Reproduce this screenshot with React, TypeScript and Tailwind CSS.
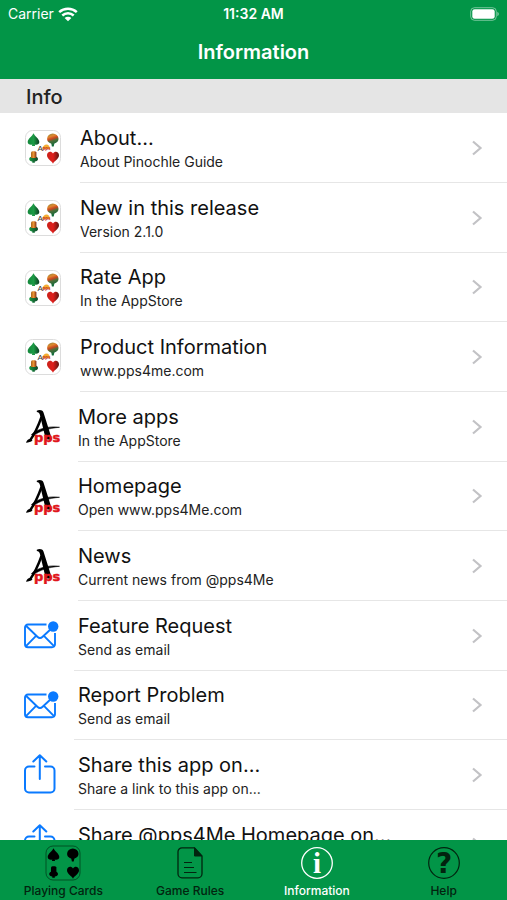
import { useState } from "react";
import type { ReactNode } from "react";
import clsx from "clsx";

type IconKind = "cards" | "apps" | "mail" | "share";

interface Item {
  title: string;
  detail: string;
  icon: IconKind;
}

const ITEMS: Item[] = [
  { title: "About...", detail: "About Pinochle Guide", icon: "cards" },
  { title: "New in this release", detail: "Version 2.1.0", icon: "cards" },
  { title: "Rate App", detail: "In the AppStore", icon: "cards" },
  { title: "Product Information", detail: "www.pps4me.com", icon: "cards" },
  { title: "More apps", detail: "In the AppStore", icon: "apps" },
  { title: "Homepage", detail: "Open www.pps4Me.com", icon: "apps" },
  { title: "News", detail: "Current news from @pps4Me", icon: "apps" },
  { title: "Feature Request", detail: "Send as email", icon: "mail" },
  { title: "Report Problem", detail: "Send as email", icon: "mail" },
  { title: "Share this app on...", detail: "Share a link to this app on...", icon: "share" },
  { title: "Share @pps4Me Homepage on...", detail: "", icon: "share" },
];

const SPADE =
  "M8.5 3.2C9.7 6.3 14.300 8.500 14.300 12c0 2.200-2.300 3.200-4.600 2.500l.4 1.400H6.900l.4-1.400C5 15.200 2.700 14.200 2.700 12 2.700 8.500 7.300 6.300 8.500 3.200z";
const BALL =
  "M27.800 3.400a5.700 5.400 0 0 1 5.700 5.400c0 3-2.300 4-4.200 4.900l-.6 2.700h-1.800l-.6-2.700c-1.900-.9-4.200-1.900-4.200-4.900a5.700 5.400 0 0 1 5.700-5.400z";
const ACORN_CAP =
  "M4.200 29c0-1.800 1.400-2.600 3-2.600h2.800c1.700 0 3 .8 3 2.600 0 1.600-1.400 2.500-3.200 2.500v1.300H7.300v-1.300c-1.800 0-3.100-.9-3.100-2.500z";
const ACORN = "M6 22.500c0-1.700 5.400-1.700 5.400 0V28H6z";
const HEART =
  "M28 33.800c-.9-2.900-6-4.600-6-8.600 0-3.900 4.500-4.600 6-1.600 1.500-3 6-2.300 6 1.600 0 4-5.100 5.700-6 8.600z";

function CardsIcon({ id }: { id: string }) {
  return (
    <svg width="36" height="36" viewBox="0 0 36 36" aria-hidden="true">
      <defs>
        <linearGradient id={`${id}-leaf`}>
          <stop offset="0" stopColor="#12873a" />
          <stop offset="0.5" stopColor="#1c9a45" />
          <stop offset="1" stopColor="#0c3d22" />
        </linearGradient>
        <linearGradient id={`${id}-ball`} x2="0.3" y2="1">
          <stop offset="0" stopColor="#7d8a48" />
          <stop offset="0.3" stopColor="#e0852c" />
          <stop offset="0.5" stopColor="#c5451f" />
          <stop offset="0.65" stopColor="#4f6d3a" />
          <stop offset="1" stopColor="#0d6b3b" />
        </linearGradient>
        <linearGradient id={`${id}-acorn`}>
          <stop offset="0" stopColor="#a8641f" />
          <stop offset="0.5" stopColor="#ee9634" />
          <stop offset="1" stopColor="#7c2a14" />
        </linearGradient>
        <linearGradient id={`${id}-cap`}>
          <stop offset="0" stopColor="#1c9a45" />
          <stop offset="1" stopColor="#0c4526" />
        </linearGradient>
        <linearGradient id={`${id}-heart`}>
          <stop offset="0" stopColor="#c9221a" />
          <stop offset="0.5" stopColor="#e01f1c" />
          <stop offset="1" stopColor="#5e1712" />
        </linearGradient>
      </defs>
      <rect x="0.5" y="0.5" width="35" height="35" rx="7" fill="#fff" stroke="#dcdcdc" />
      <path d={SPADE} fill={`url(#${id}-leaf)`} />
      <path d={BALL} fill={`url(#${id}-ball)`} />
      <path d={ACORN_CAP} fill={`url(#${id}-cap)`} />
      <path d={ACORN} fill={`url(#${id}-acorn)`} />
      <path d={HEART} fill={`url(#${id}-heart)`} />
      <path d="M17.500 19c.2-3 2-4.500 4-4.500s3.300 1.700 3.500 4.500z" fill="#f3ad32" />
      <text x="12.500" y="20.500" fontSize="8" fontFamily="Liberation Sans, sans-serif" fill="#333">
        A
      </text>
      <text x="17.500" y="20" fontSize="4.500" fontWeight="700" fontFamily="Liberation Sans, sans-serif" fill="#c5281c">
        pps
      </text>
    </svg>
  );
}

function AppsIcon() {
  return (
    <svg width="36" height="36" viewBox="0 0 36 36" aria-hidden="true">
      <path d="M11.800 1.700C14 .7 17.500.500 18.500 3.500L27 30.500h-6.200L14.800 5.500c-.4-1.500-1.400-2.400-3-2.600z" fill="#000" />
      <path d="M16.500 8C13.500 16.500 10 24.500 5 31.500" fill="none" stroke="#000" strokeWidth="2.400" />
      <path d="M1 33.800c1-3.700 4-5 6.500-2.600-1.500 2.200-4 1.800-6.500 2.600z" fill="#000" />
      <path d="M6.500 25.500C13 19.500 24 16.800 34.500 18.300 24 19.300 14 21.800 8 27.300z" fill="#000" stroke="#000" strokeWidth="0.600" />
      <text
        x="9"
        y="32.500"
        fontSize="13"
        fontWeight="700"
        fontFamily="DejaVu Sans, sans-serif"
        fill="#e0151b"
        stroke="#e0151b"
        strokeWidth="0.500"
      >
        pps
      </text>
    </svg>
  );
}

function MailIcon() {
  return (
    <svg width="36" height="36" viewBox="0 0 36 36" fill="none" stroke="#0a7aff" strokeWidth="1.900" aria-hidden="true">
      <path d="M22.500 6.500H4A3 3 0 0 0 1 9.500v16.800a3 3 0 0 0 3 3h24a3 3 0 0 0 3-3V15" />
      <path d="M2 7.800l11.400 11c1.600 1.500 3.600 1.500 5.200 0l7-6.500M2 28.200l9.800-10M30 28.200l-9.800-10" strokeLinecap="round" />
      <circle cx="29.200" cy="8.500" r="5.200" fill="#0a7aff" stroke="none" />
    </svg>
  );
}

function ShareIcon() {
  return (
    <svg
      width="36"
      height="42"
      viewBox="0 0 36 42"
      fill="none"
      stroke="#0a7aff"
      strokeWidth="2"
      strokeLinecap="round"
      strokeLinejoin="round"
      aria-hidden="true"
    >
      <path d="M10.500 12.500H5A4 4 0 0 0 1 16.500v18a4 4 0 0 0 4 4h21.500a4 4 0 0 0 4-4v-18a4 4 0 0 0-4-4H21" />
      <path d="M15.800 25V1.200M9.300 7.500l6.500-6.300 6.500 6.300" />
    </svg>
  );
}

function Chevron() {
  return (
    <svg width="11" height="16" viewBox="0 0 11 16" fill="none" stroke="#c2c2c5" strokeWidth="2.200" aria-hidden="true">
      <path d="M1 1.500L8.500 8 1 14.500" />
    </svg>
  );
}

function RowIcon({ kind, id }: { kind: IconKind; id: string }) {
  if (kind === "cards") return <CardsIcon id={id} />;
  if (kind === "apps") return <AppsIcon />;
  if (kind === "mail") return <MailIcon />;
  return <ShareIcon />;
}

function ListRow({ item, index }: { item: Item; index: number }) {
  const system = item.icon === "mail" || item.icon === "share";
  return (
    <li className="h-[70px] nth-[3n]:h-[69px]">
      <button type="button" className="flex h-full w-full cursor-pointer text-left">
        <span
          className={clsx(
            "flex shrink-0 items-center",
            item.icon === "cards" && "w-20 pl-[25px]",
            item.icon === "apps" && "w-[78px] pl-[25px]",
            system && "w-[74px] pl-6"
          )}
        >
          <RowIcon kind={item.icon} id={`suit-${index}`} />
        </span>
        <span
          className={clsx(
            "flex h-full min-w-0 flex-1 items-center border-b border-[#e6e6e6] pr-6",
            system && "pl-1"
          )}
        >
          <span className="min-w-0 flex-1">
            <span className="block truncate text-[20px] leading-7 text-[#111]">{item.title}</span>
            <span className="block h-5 truncate text-[14px] leading-5 text-[#222]">{item.detail}</span>
          </span>
          <Chevron />
        </span>
      </button>
    </li>
  );
}

function StatusBar() {
  return (
    <div className="grid h-7 grid-cols-3 items-center px-2 text-[14px] leading-5">
      <span className="flex items-center gap-1">
        Carrier
        <svg width="20" height="15" viewBox="0 0 20 15" fill="none" stroke="#fff" strokeWidth="2.500" aria-label="Wi-Fi">
          <path d="M1.200 5.200C6.200.6 13.800.6 18.800 5.200M4.300 8.500c3.300-3 8.100-3 11.400 0" />
          <path d="M10 14.300L6.600 10.900c1.900-1.700 4.900-1.700 6.800 0z" fill="#fff" stroke="none" />
        </svg>
      </span>
      <span className="text-center font-semibold">11:32 AM</span>
      <svg className="justify-self-end" width="30" height="14" viewBox="0 0 30 14" aria-label="Battery full">
        <rect x="1.700" y="0.700" width="25.600" height="12.600" rx="3.800" fill="none" stroke="#fff" strokeOpacity="0.450" />
        <rect x="3.300" y="2.300" width="22.400" height="9.400" rx="2.300" fill="#fff" />
        <path d="M28.300 4.800c2 .8 2 3.600 0 4.400z" fill="#fff" fillOpacity="0.500" />
      </svg>
    </div>
  );
}

const TABS: { label: string; icon: ReactNode }[] = [
  {
    label: "Playing Cards",
    icon: (
      <svg width="36" height="36" viewBox="0 0 36 36" fill="currentColor" aria-hidden="true">
        <rect x="1" y="1" width="34" height="34" rx="7" fill="none" stroke="currentColor" strokeOpacity="0.600" />
        <g fill="#000">
          <path d={SPADE} />
          <path d={BALL} />
          <path d={ACORN} />
          <path d={ACORN_CAP} />
          <path d={HEART} />
        </g>
      </svg>
    ),
  },
  {
    label: "Game Rules",
    icon: (
      <svg width="36" height="36" viewBox="0 0 36 36" fill="none" stroke="currentColor" aria-hidden="true">
        <path d="M22.500 2.800H10a4 4 0 0 0-4 4v22a4 4 0 0 0 4 4h16a4 4 0 0 0 4-4V11z" strokeWidth="1.300" />
        <path d="M22.500 2.800V11H30z" fill="currentColor" />
        <path d="M12 17.500h8M12 22.500h10M12 27.500h12.500" strokeWidth="1.200" />
      </svg>
    ),
  },
  {
    label: "Information",
    icon: (
      <svg width="36" height="36" viewBox="0 0 36 36" aria-hidden="true">
        <circle cx="18" cy="18" r="15.300" fill="none" stroke="currentColor" strokeWidth="1.300" />
        <text x="18" y="27.500" textAnchor="middle" fontSize="29" fontWeight="700" fontFamily="Liberation Serif, serif" fill="currentColor">
          i
        </text>
      </svg>
    ),
  },
  {
    label: "Help",
    icon: (
      <svg width="36" height="36" viewBox="0 0 36 36" aria-hidden="true">
        <circle cx="18" cy="18" r="15.300" fill="none" stroke="currentColor" strokeWidth="1.200" />
        <text x="18" y="28" textAnchor="middle" fontSize="28" fontWeight="700" fontFamily="DejaVu Sans, sans-serif" fill="currentColor">
          ?
        </text>
      </svg>
    ),
  },
];

export default function App() {
  const [tab, setTab] = useState("Information");

  return (
    <div className="flex h-screen flex-col bg-white font-['Inter',sans-serif]">
      <header className="shrink-0 bg-[#029547] pb-[13px] text-white">
        <StatusBar />
        <h1 className="pt-2.5 text-center text-[20px] leading-7 font-semibold">Information</h1>
      </header>

      <main className="flex min-h-0 flex-1 flex-col">
        <h2 className="shrink-0 bg-[#e5e5e5] px-[26px] pt-1 pb-0.5 text-[20px] leading-7 font-medium text-[#222]">
          Info
        </h2>
        <ul className="min-h-0 flex-1 overflow-y-auto [scrollbar-width:none]">
          {ITEMS.map((item, i) => (
            <ListRow key={item.title} item={item} index={i} />
          ))}
        </ul>
      </main>

      <nav className="grid shrink-0 grid-cols-4 bg-[#029547] pt-[5px] pb-px">
        {TABS.map((t) => (
          <button
            key={t.label}
            type="button"
            aria-current={t.label === tab ? "page" : undefined}
            onClick={() => setTab(t.label)}
            className={clsx(
              "flex cursor-pointer flex-col items-center gap-0.5 text-[12px] leading-4 font-medium",
              t.label === tab ? "text-white" : "text-[#02240f]"
            )}
          >
            {t.icon}
            {t.label}
          </button>
        ))}
      </nav>
    </div>
  );
}
